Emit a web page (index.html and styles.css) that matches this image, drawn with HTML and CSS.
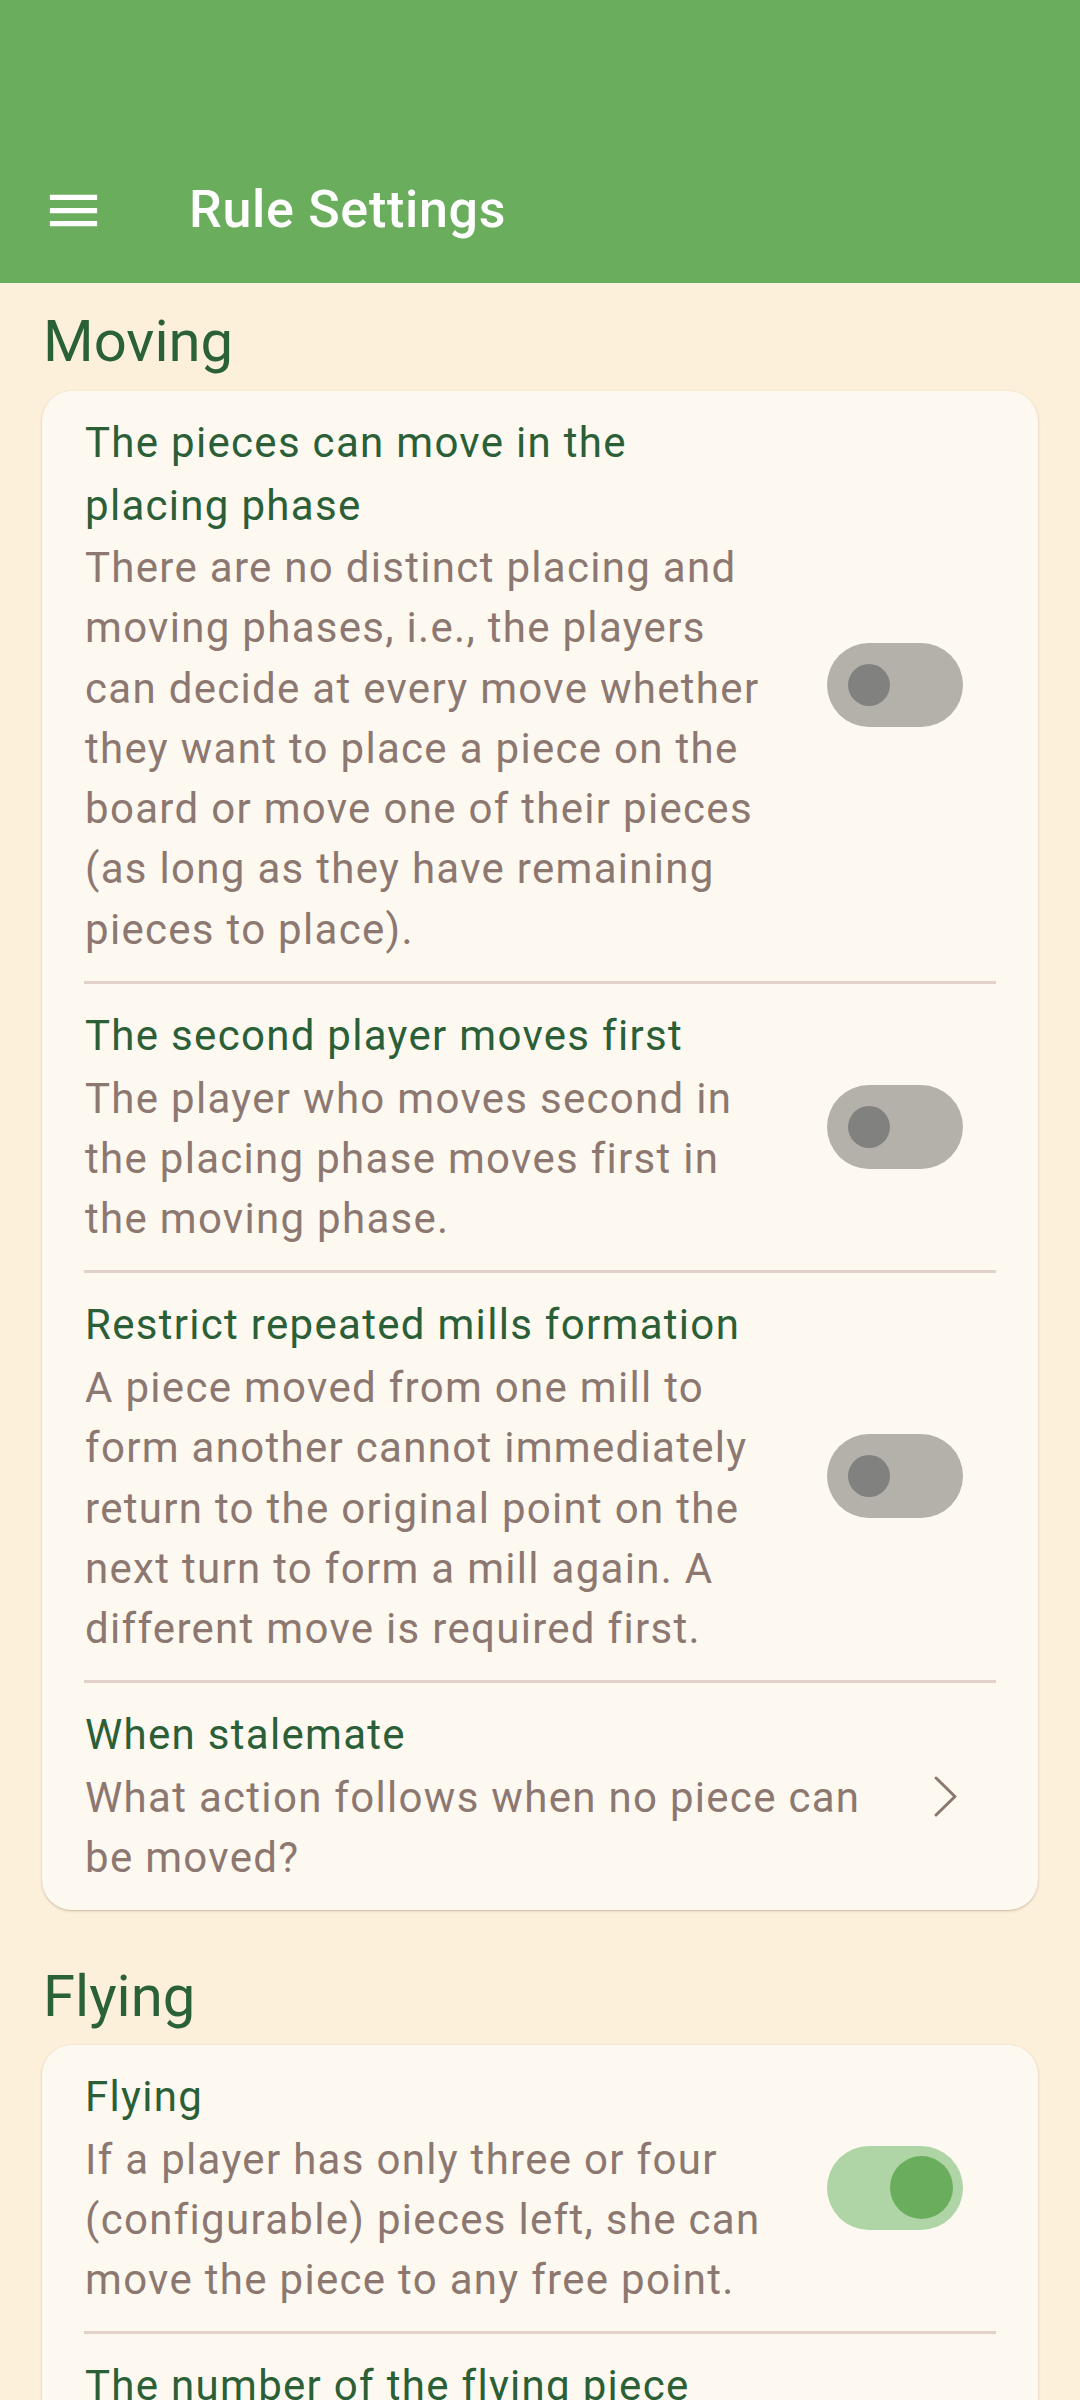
FILE: index.html
```html
<!DOCTYPE html>
<html lang="en">
<head>
<meta charset="utf-8">
<title>Rule Settings</title>
<link rel="stylesheet" href="styles.css">
</head>
<body>
<header class="appbar">
  <div class="toolbar">
    <svg class="menu-icon" viewBox="0 0 24 24" width="63" height="63" aria-hidden="true">
      <path d="M3 18h18v-2H3v2zm0-5h18v-2H3v2zm0-7v2h18V6H3z" fill="#ffffff"/>
    </svg>
    <h1 class="appbar-title">Rule Settings</h1>
  </div>
</header>

<main class="content">
  <h2 class="section-title first">Moving</h2>
  <section class="card">
    <div class="tile">
      <div class="tile-text">
        <div class="tile-title">The pieces can move in the placing phase</div>
        <div class="tile-desc">There are no distinct placing and moving phases, i.e., the players can decide at every move whether they want to place a piece on the board or move one of their pieces (as long as they have remaining pieces to place).</div>
      </div>
      <div class="switch off"><span class="thumb"></span></div>
    </div>
    <div class="divider"></div>
    <div class="tile">
      <div class="tile-text">
        <div class="tile-title">The second player moves first</div>
        <div class="tile-desc">The player who moves second in the placing phase moves first in the moving phase.</div>
      </div>
      <div class="switch off"><span class="thumb"></span></div>
    </div>
    <div class="divider"></div>
    <div class="tile">
      <div class="tile-text">
        <div class="tile-title">Restrict repeated mills formation</div>
        <div class="tile-desc">A piece moved from one mill to form another cannot immediately return to the original point on the next turn to form a mill again. A different move is required first.</div>
      </div>
      <div class="switch off"><span class="thumb"></span></div>
    </div>
    <div class="divider"></div>
    <div class="tile">
      <div class="tile-text wide">
        <div class="tile-title">When stalemate</div>
        <div class="tile-desc">What action follows when no piece can be moved?</div>
      </div>
      <svg class="chevron" viewBox="0 0 24 24" width="63" height="63" aria-hidden="true">
        <polyline points="8.4,4.95 15.6,12 8.4,19.05" fill="none" stroke="#8C7870" stroke-width="1.15" stroke-linecap="round" stroke-linejoin="round"/>
      </svg>
    </div>
  </section>

  <h2 class="section-title">Flying</h2>
  <section class="card">
    <div class="tile">
      <div class="tile-text">
        <div class="tile-title">Flying</div>
        <div class="tile-desc">If a player has only three or four (configurable) pieces left, she can move the piece to any free point.</div>
      </div>
      <div class="switch on"><span class="thumb"></span></div>
    </div>
    <div class="divider"></div>
    <div class="tile">
      <div class="tile-text wide">
        <div class="tile-title">The number of the flying piece</div>
        <div class="tile-desc">If the number of a player's pieces is reduced to this number, the player can fly.</div>
      </div>
      <svg class="chevron" viewBox="0 0 24 24" width="63" height="63" aria-hidden="true">
        <polyline points="8.4,4.95 15.6,12 8.4,19.05" fill="none" stroke="#8C7870" stroke-width="1.15" stroke-linecap="round" stroke-linejoin="round"/>
      </svg>
    </div>
  </section>
</main>
</body>
</html>
```

FILE: styles.css
```css
html, body {
  margin: 0;
  padding: 0;
}

body {
  background: #FCF0DB;
  font-family: Roboto, "Noto Sans", "Liberation Sans", sans-serif;
  width: 1080px;
  min-height: 2400px;
  overflow: hidden;
}

.appbar {
  height: 283px;
  background: #69AD5D;
  display: flex;
  flex-direction: column;
  justify-content: flex-end;
  box-sizing: border-box;
}

.toolbar {
  height: 146px;
  display: flex;
  align-items: center;
}

.menu-icon {
  display: block;
  margin-left: 42px;
  flex: none;
}

.appbar-title {
  margin: 0 0 0 84px;
  font-size: 52px;
  font-weight: 500;
  color: #ffffff;
  letter-spacing: 0.7px;
  line-height: 1.2;
}

.content {
  padding: 0 42px;
}

.section-title {
  margin: 50px 0 12px 1px;
  font-size: 58px;
  font-weight: 400;
  line-height: 73.5px;
  color: #2A6137;
  letter-spacing: 0;
}

.section-title.first {
  margin-top: 22px;
}

.card {
  background: #FEF9F0;
  border-radius: 30px;
  box-shadow: 0 1px 3px rgba(90, 70, 40, 0.22), 0 1px 1px rgba(90, 70, 40, 0.12);
}

.tile {
  display: flex;
  align-items: center;
  padding: 20px 0 21px 43px;
}

.tile-text {
  width: 686px;
  flex: none;
}

.tile-text.wide {
  width: 800px;
}

.tile-title {
  font-size: 42px;
  line-height: 63px;
  letter-spacing: 1.3px;
  color: #2A5F37;
}

.tile-desc {
  margin-top: 1.5px;
  font-size: 42px;
  line-height: 60.3px;
  letter-spacing: 1.3px;
  color: #8C7870;
}

.divider {
  height: 3px;
  margin: 0 42px;
  background: #E2D1CA;
}

.switch {
  margin-left: auto;
  margin-right: 75px;
  width: 136px;
  height: 84px;
  border-radius: 42px;
  display: flex;
  align-items: center;
  box-sizing: border-box;
  flex: none;
}

.switch .thumb {
  display: block;
  border-radius: 50%;
}

.switch.off {
  background: #B4B1AB;
  padding-left: 21px;
}

.switch.off .thumb {
  width: 42px;
  height: 42px;
  background: #818180;
}

.switch.on {
  background: #AFD5A6;
  justify-content: flex-end;
  padding-right: 10px;
}

.switch.on .thumb {
  width: 63px;
  height: 63px;
  background: #69AD5D;
}

.chevron {
  display: block;
  flex: none;
  margin-left: auto;
  margin-right: 61px;
}
```
